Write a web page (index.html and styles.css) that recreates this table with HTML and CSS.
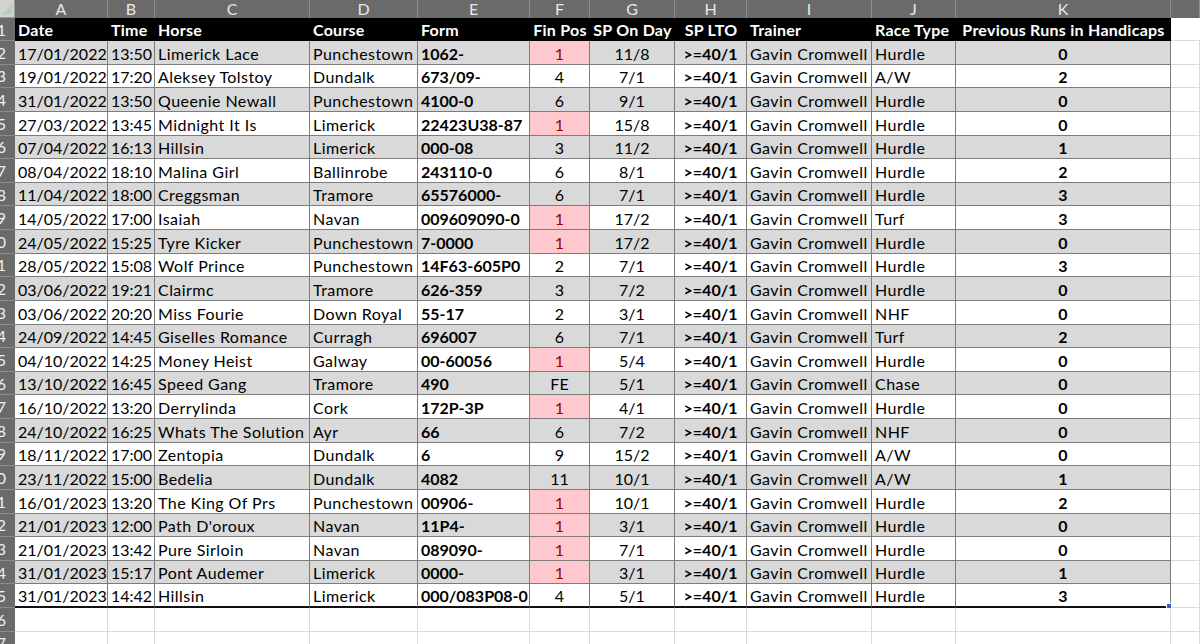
FILE: index.html
```html
<!DOCTYPE html>
<html>
<head>
<meta charset="utf-8">
<link rel="stylesheet" href="styles.css">
</head>
<body>
<div class="sheet">
  <div class="row colhead">
    <div class="corner"><svg width="15" height="17" viewBox="0 0 15 17"><polygon points="13,4 13,15 2,15" fill="#b7cdb9"/></svg></div>
    <div class="ch">A</div><div class="ch">B</div><div class="ch">C</div><div class="ch">D</div><div class="ch">E</div><div class="ch">F</div><div class="ch">G</div><div class="ch">H</div><div class="ch">I</div><div class="ch">J</div><div class="ch">K</div><div class="ch"></div>
  </div>
  <div class="row head">
    <div class="rh"><span>1</span></div>
    <div class="c">Date</div><div class="c">Time</div><div class="c">Horse</div><div class="c">Course</div><div class="c">Form</div><div class="c ctr">Fin Pos</div><div class="c ctr">SP On Day</div><div class="c ctr">SP LTO</div><div class="c">Trainer</div><div class="c">Race Type</div><div class="c ctr">Previous Runs in Handicaps</div><div class="c blank"></div>
  </div>
  <div id="rows"></div>
  <div class="row empty"><div class="rh"><span>26</span></div><div class="e"></div><div class="e"></div><div class="e"></div><div class="e"></div><div class="e"></div><div class="e"></div><div class="e"></div><div class="e"></div><div class="e"></div><div class="e"></div><div class="e"></div><div class="e"></div></div>
  <div class="row empty"><div class="rh"><span>27</span></div><div class="e"></div><div class="e"></div><div class="e"></div><div class="e"></div><div class="e"></div><div class="e"></div><div class="e"></div><div class="e"></div><div class="e"></div><div class="e"></div><div class="e"></div><div class="e"></div></div>
  <div class="fill-handle"></div>
</div>
<script src="app.js"></script>
</body>
</html>
```

FILE: app.js
```js
const data = [
["17/01/2022","13:50","Limerick Lace","Punchestown","1062-","1","11/8","Hurdle","0"],
["19/01/2022","17:20","Aleksey Tolstoy","Dundalk","673/09-","4","7/1","A/W","2"],
["31/01/2022","13:50","Queenie Newall","Punchestown","4100-0","6","9/1","Hurdle","0"],
["27/03/2022","13:45","Midnight It Is","Limerick","22423U38-87","1","15/8","Hurdle","0"],
["07/04/2022","16:13","Hillsin","Limerick","000-08","3","11/2","Hurdle","1"],
["08/04/2022","18:10","Malina Girl","Ballinrobe","243110-0","6","8/1","Hurdle","2"],
["11/04/2022","18:00","Creggsman","Tramore","65576000-","6","7/1","Hurdle","3"],
["14/05/2022","17:00","Isaiah","Navan","009609090-0","1","17/2","Turf","3"],
["24/05/2022","15:25","Tyre Kicker","Punchestown","7-0000","1","17/2","Hurdle","0"],
["28/05/2022","15:08","Wolf Prince","Punchestown","14F63-605P0","2","7/1","Hurdle","3"],
["03/06/2022","19:21","Clairmc","Tramore","626-359","3","7/2","Hurdle","0"],
["03/06/2022","20:20","Miss Fourie","Down Royal","55-17","2","3/1","NHF","0"],
["24/09/2022","14:45","Giselles Romance","Curragh","696007","6","7/1","Turf","2"],
["04/10/2022","14:25","Money Heist","Galway","00-60056","1","5/4","Hurdle","0"],
["13/10/2022","16:45","Speed Gang","Tramore","490","FE","5/1","Chase","0"],
["16/10/2022","13:20","Derrylinda","Cork","172P-3P","1","4/1","Hurdle","0"],
["24/10/2022","16:25","Whats The Solution","Ayr","66","6","7/2","NHF","0"],
["18/11/2022","17:00","Zentopia","Dundalk","6","9","15/2","A/W","0"],
["23/11/2022","15:00","Bedelia","Dundalk","4082","11","10/1","A/W","1"],
["16/01/2023","13:20","The King Of Prs","Punchestown","00906-","1","10/1","Hurdle","2"],
["21/01/2023","12:00","Path D'oroux","Navan","11P4-","1","3/1","Hurdle","0"],
["21/01/2023","13:42","Pure Sirloin","Navan","089090-","1","7/1","Hurdle","0"],
["31/01/2023","15:17","Pont Audemer","Limerick","0000-","1","3/1","Hurdle","1"],
["31/01/2023","14:42","Hillsin","Limerick","000/083P08-0","4","5/1","Hurdle","3"]
];
const host = document.getElementById('rows');
data.forEach((r, i) => {
  const row = document.createElement('div');
  row.className = 'row data' + (i % 2 === 0 ? ' band' : '') + (i === data.length - 1 ? ' last' : '');
  const cells = [
    ['rh', '<span>' + (i + 2) + '</span>'],
    ['c', r[0]], ['c', r[1]], ['c t', r[2]], ['c t', r[3]], ['c b', r[4]],
    ['c ctr' + (r[5] === '1' ? ' win' : ''), r[5]],
    ['c ctr', r[6]], ['c ctr b', '&gt;=40/1'], ['c t', 'Gavin Cromwell'], ['c t', r[7]], ['c ctr b', r[8]],
    ['e', '']
  ];
  row.innerHTML = cells.map(c => '<div class="' + c[0] + '">' + c[1] + '</div>').join('');
  host.appendChild(row);
});
```

FILE: styles.css
```css
html, body { margin: 0; padding: 0; background: #fff; overflow: hidden; }
.sheet {
  position: relative;
  width: 1200px;
  height: 644px;
  overflow: hidden;
  font-family: Lato, "Open Sans", sans-serif;
  font-size: 16px;
  color: #000;
}
.row {
  display: grid;
  grid-template-columns: 15px 93px 47px 155px 108px 112px 60px 85px 72px 125px 84px 215px 1fr;
  box-sizing: border-box;
}
.colhead { height: 18px; background: #6a6a6a; }
.corner { background: #d2d2d2; border-right: 1px solid #9a9a9a; border-bottom: 1px solid #9a9a9a; box-sizing: border-box; display: flex; }
.ch {
  color: #e8e8e8;
  text-align: center;
  line-height: 18px;
  font-size: 16px;
  border-right: 1px solid #8c8c8c;
  box-sizing: border-box;
}
.rh {
  background: #6a6a6a;
  color: #f0f0f0;
  display: flex;
  justify-content: flex-end;
  align-items: center;
  overflow: hidden;
  padding-right: 9px;
  border-bottom: 1px solid #8c8c8c;
  box-sizing: border-box;
  white-space: nowrap;
  font-size: 16px;
}
.head { height: 23px; }
.head .c {
  background: #000;
  color: #fff;
  font-weight: bold;
  display: flex;
  align-items: center;
  padding: 0 3px;
  white-space: nowrap;
  box-sizing: border-box;
  letter-spacing: 0.25px;
}
.head .c.ctr { justify-content: center; }
.head .c.blank { background: #fff; border-bottom: 1px solid #dadada; }
.data { height: 23.625px; }
.data .c {
  display: flex;
  align-items: flex-end;
  padding: 0 3px 1px;
  white-space: nowrap;
  overflow: visible;
  border-right: 1px solid #7c7c7c;
  border-bottom: 1px solid #7c7c7c;
  box-sizing: border-box;
  background: #fff;
}
.data .c.t { letter-spacing: 0.45px; }
.data.band .c { background: #d9d9d9; }
.data .c.ctr { justify-content: center; }
.data .c.b { font-weight: bold; }
.data .c.win, .data.band .c.win { background: #ffc7ce; color: #9c0006; }
.data .e, .empty .e {
  border-right: 1px solid #dadada;
  border-bottom: 1px solid #dadada;
  box-sizing: border-box;
}
.data.last .c { border-bottom: 2px solid #111; }
.empty { height: 23.625px; }
.fill-handle {
  position: absolute;
  left: 1166px;
  top: 603px;
  width: 6px;
  height: 6px;
  background: #3b5dbf;
  border: 1px solid #fff;
  box-sizing: border-box;
}
```
